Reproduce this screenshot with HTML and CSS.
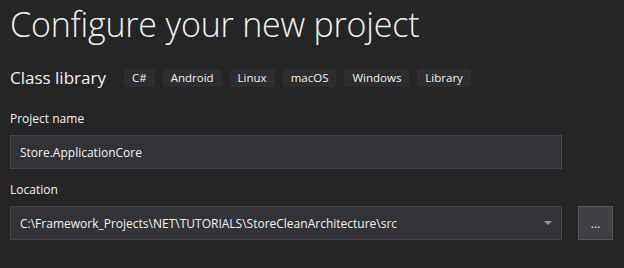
FILE: index.html
```html
<!DOCTYPE html>
<html lang="en">
<head>
    <meta charset="UTF-8">
    <title>Configure your new project</title>
    <link rel="stylesheet" href="styles.css">
</head>
<body>
<div class="page">
    <h1 class="title">Configure your new project</h1>

    <div class="template">
        <span class="template-name">Class library</span>
        <div class="tags">
            <span class="tag">C#</span>
            <span class="tag">Android</span>
            <span class="tag">Linux</span>
            <span class="tag">macOS</span>
            <span class="tag">Windows</span>
            <span class="tag">Library</span>
        </div>
    </div>

    <div class="field">
        <label class="label">Project name</label>
        <div class="input name-input">Store.ApplicationCore</div>
    </div>

    <div class="field location-field">
        <label class="label">Location</label>
        <div class="location-row">
            <div class="input location-input">
                <span>C:\Framework_Projects\NET\TUTORIALS\StoreCleanArchitecture\src</span>
                <svg class="arrow" width="8" height="5" viewBox="0 0 8 5"><path d="M0 0h8L4 4z" fill="#9a9a9e"/></svg>
            </div>
            <button type="button" class="browse">...</button>
        </div>
    </div>
</div>
</body>
</html>
```

FILE: styles.css
```css
body {
    margin: 0;
    background-color: #252526;
    color: #f1f1f1;
    font-family: 'Open Sans', 'Noto Sans', sans-serif;
}

.page {
    padding: 0 0 0 10px;
    width: 603px;
}

.title {
    margin: 0;
    padding-top: 2px;
    font-size: 34px;
    font-weight: 300;
    line-height: 44px;
    letter-spacing: -0.2px;
    color: #f1f1f1;
}

.template {
    display: flex;
    align-items: center;
    margin-top: 21px;
    height: 22px;
}

.template-name {
    font-size: 17px;
    line-height: 22px;
    width: 114px;
    color: #f1f1f1;
}

.tags {
    display: flex;
    gap: 8px;
}

.tag {
    background-color: #2d2d30;
    border-radius: 3px;
    height: 18px;
    line-height: 18px;
    padding: 0 8px;
    font-size: 11.5px;
    color: #f1f1f1;
}

.field {
    margin-top: 22px;
}

.location-field {
    margin-top: 13px;
}

.label {
    display: block;
    font-size: 12px;
    line-height: 16px;
    color: #f1f1f1;
}

.input {
    box-sizing: border-box;
    height: 34px;
    margin-top: 8px;
    background-color: #333337;
    border: 1px solid #434346;
    font-size: 12px;
    color: #f1f1f1;
    display: flex;
    align-items: center;
    padding: 0 8px 0 9px;
}

.name-input {
    width: 552px;
}

.location-row {
    display: flex;
    gap: 16px;
    align-items: flex-end;
}

.location-input {
    width: 552px;
    justify-content: space-between;
}

.arrow {
    margin-right: 1px;
}

.browse {
    width: 35px;
    height: 34px;
    background-color: #3f3f46;
    border: 1px solid #555558;
    color: #f1f1f1;
    font-family: 'Open Sans', sans-serif;
    font-size: 12px;
    padding: 0;
}
```
